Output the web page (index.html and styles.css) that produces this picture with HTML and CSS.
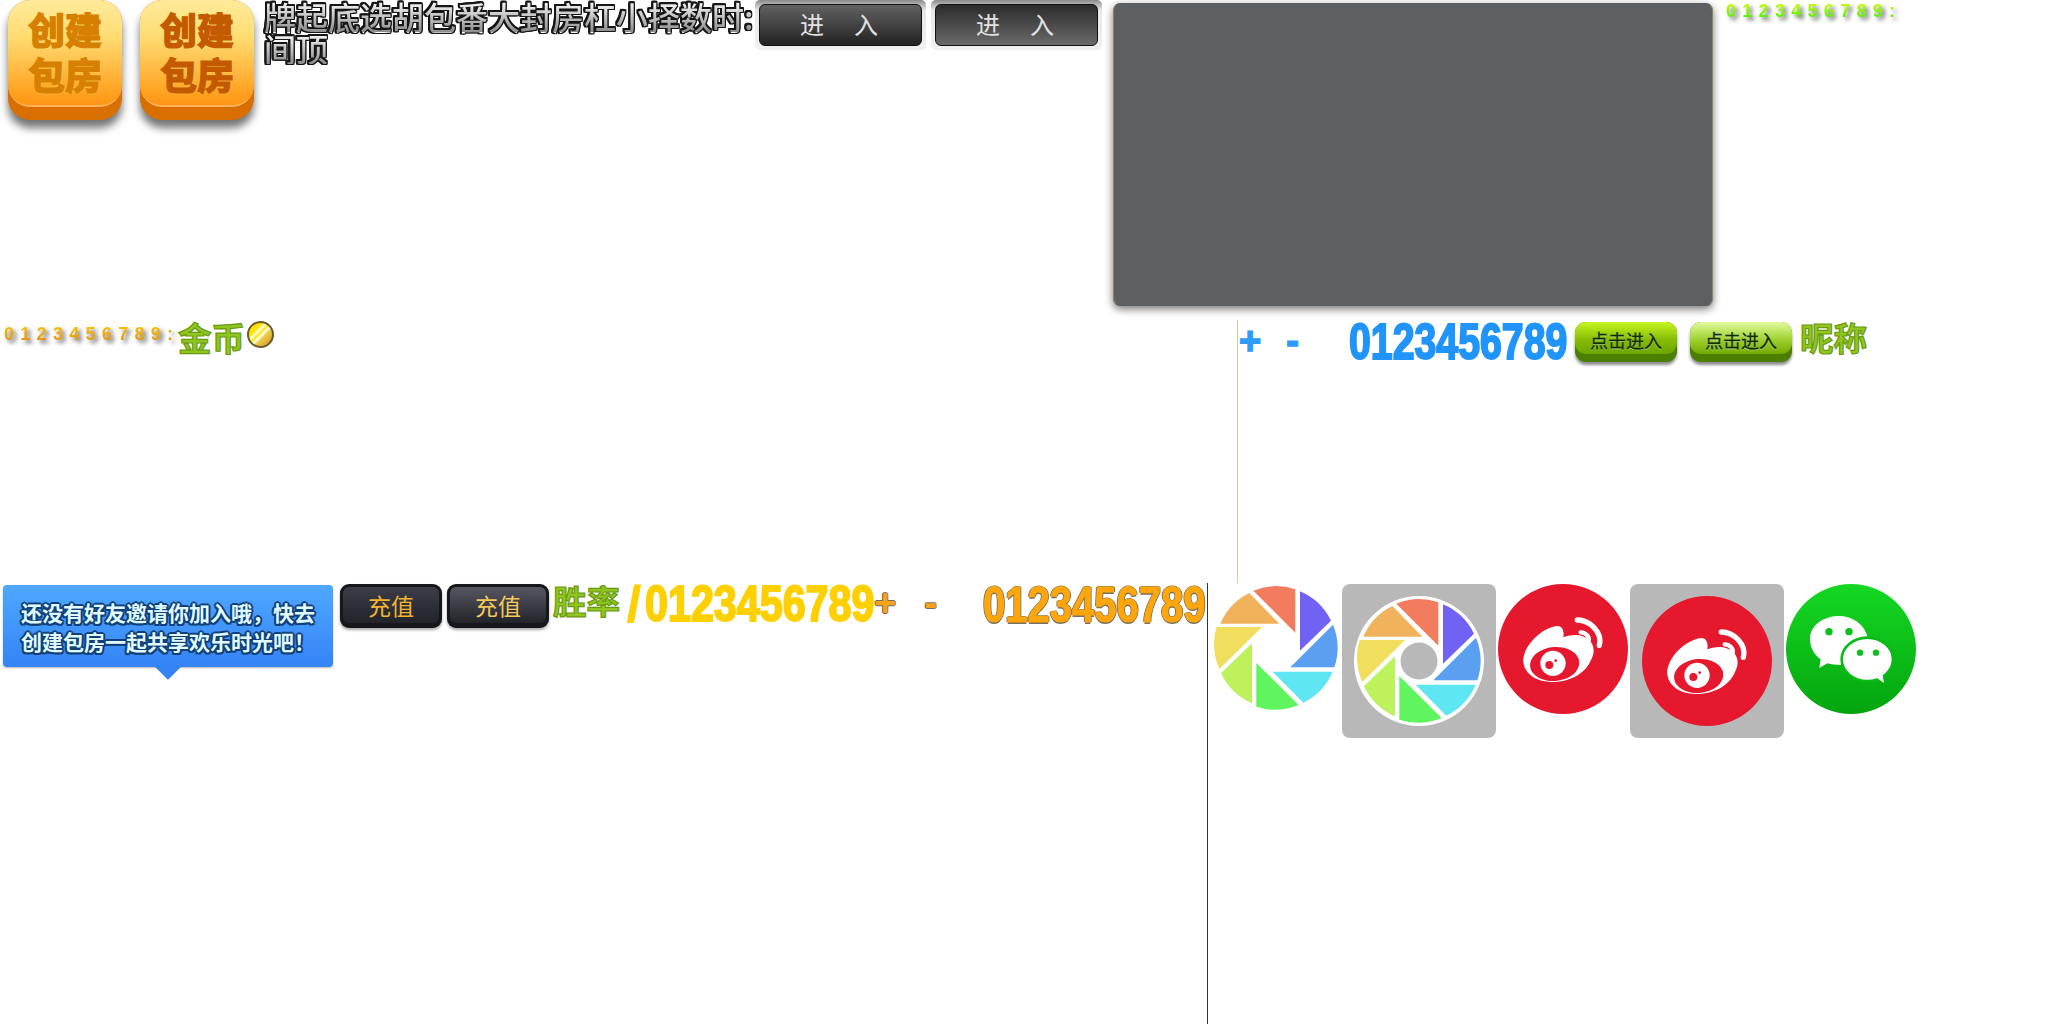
FILE: index.html
```html
<!DOCTYPE html>
<html lang="zh">
<head>
    <meta charset="UTF-8">
    <title>大厅资源</title>
    <link rel="stylesheet" href="styles.css">
</head>
<body>
    <svg class="defs" width="0" height="0">
        <defs>
            <symbol id="aperture" viewBox="0 0 450 444">
                <path fill="#7063f3" d="M297 52A183 183 0 0 1 390 140L297 230Z"/>
                <path fill="#5b9ff0" d="M396 152A183 183 0 0 1 400 280L268 280Z"/>
                <path fill="#5ee7f2" d="M395 293A183 183 0 0 1 307 386L215 293Z"/>
                <path fill="#60f45f" d="M293 393A183 183 0 0 1 166 398L166 267Z"/>
                <path fill="#bdf25c" d="M153 388A183 183 0 0 1 60 298L153 208Z"/>
                <path fill="#f1de5c" d="M55 285A183 183 0 0 1 47 159L183 159Z"/>
                <path fill="#f1b25c" d="M58 149A183 183 0 0 1 145 57L235 149Z"/>
                <path fill="#f47c5e" d="M157 50A183 183 0 0 1 283 46L283 176Z"/>
            </symbol>
            <symbol id="weibo" viewBox="0 0 390 390">
                <circle cx="195" cy="195" r="195" fill="#e5182e"/>
                <path fill="#fff" d="M76 235C72 200 110 145 165 128C190 120 200 135 196 160C225 150 250 150 270 165C290 182 292 205 278 230C260 270 215 294 160 294C115 294 80 270 76 235Z"/>
                <ellipse cx="170" cy="240" rx="74" ry="51" fill="#e5182e" transform="rotate(-5 170 240)"/>
                <circle cx="165" cy="238" r="38" fill="#fff"/>
                <circle cx="154" cy="243" r="12" fill="#e5182e"/>
                <circle cx="173" cy="230" r="4" fill="#e5182e"/>
                <path fill="none" stroke="#fff" stroke-width="16" stroke-linecap="round" d="M238 108C275 108 314 145 304 184"/>
                <path fill="none" stroke="#fff" stroke-width="13" stroke-linecap="round" d="M248 145C262 145 276 158 272 171"/>
            </symbol>
            <linearGradient id="wechat-bg" x1="0" y1="0" x2="0" y2="1">
                <stop offset="0" stop-color="#15d823"/>
                <stop offset="1" stop-color="#04a50e"/>
            </linearGradient>
        </defs>
    </svg>

    <div class="row row-one">
        <div class="create-btn"><div class="create-text"><div>创建</div><div>包房</div></div></div>
        <div class="create-btn create-btn-on"><div class="create-text"><div>创建</div><div>包房</div></div></div>
        <div class="rule-words">牌起底选胡包番大封房杠小择数时:间顶</div>
        <div class="enter-frame"><div class="enter-btn">进　入</div></div>
        <div class="enter-frame"><div class="enter-btn enter-btn-on">进　入</div></div>
        <div class="panel"></div>
        <div class="tiny-digits tiny-green">0123456789:</div>
    </div>

    <div class="row row-two">
        <div class="tiny-digits tiny-gold">0123456789:</div>
        <div class="green-word">金币</div>
        <div class="coin"></div>
        <div class="line line-tan"></div>
        <div class="sign-set sign-blue"><span>+</span><span>-</span></div>
        <div class="digit-box digit-blue-box"><span class="digit-text digit-blue">0123456789</span></div>
        <div class="go-btn"><div class="go-face">点击进入</div></div>
        <div class="go-btn go-btn-on"><div class="go-face">点击进入</div></div>
        <div class="green-word nick-word">昵称</div>
    </div>

    <div class="row row-three">
        <div class="tip">还没有好友邀请你加入哦，快去<br>创建包房一起共享欢乐时光吧！</div>
        <div class="pay-btn"><div class="pay-face">充值</div></div>
        <div class="pay-btn pay-btn-on"><div class="pay-face">充值</div></div>
        <div class="green-word rate-word">胜率</div>
        <div class="digit-box digit-slash-box"><span class="digit-text digit-slash">/</span></div>
        <div class="digit-box digit-yellow-box"><span class="digit-text digit-yellow">0123456789</span></div>
        <div class="sign-set sign-orange"><span>+</span><span>-</span></div>
        <div class="digit-box digit-orange-box"><span class="digit-text digit-orange">0123456789</span></div>
        <div class="line line-dark"></div>
        <svg class="icon aperture-plain"><use href="#aperture"/></svg>
        <div class="share-box">
            <svg class="share-art" viewBox="0 0 154 154">
                <circle cx="77" cy="77" r="65" fill="#fff"/>
                <circle cx="77" cy="77" r="18.5" fill="#b8b8b8"/>
                <svg x="2" y="3" width="150" height="148"><use href="#aperture"/></svg>
            </svg>
        </div>
        <svg class="icon icon-round"><use href="#weibo"/></svg>
        <div class="share-box share-box-weibo">
            <svg class="icon icon-round"><use href="#weibo"/></svg>
        </div>
        <svg class="icon icon-round" viewBox="0 0 390 390">
            <circle cx="195" cy="195" r="195" fill="url(#wechat-bg)"/>
            <path fill="#fff" d="M72 165C72 125 112 96 158 96C200 96 235 120 245 160C205 160 165 190 166 243C150 243 135 241 124 238L100 252L104 226C84 212 72 190 72 165Z"/>
            <circle cx="129" cy="143" r="11" fill="#0cc01a"/>
            <circle cx="189" cy="143" r="11" fill="#0cc01a"/>
            <ellipse cx="244" cy="226" rx="77" ry="65" fill="#fff" stroke="#0abb18" stroke-width="8"/>
            <path fill="#fff" d="M270 280L294 297L289 268Z"/>
            <circle cx="222" cy="206" r="9.5" fill="#0cc01a"/>
            <circle cx="270" cy="206" r="9.5" fill="#0cc01a"/>
        </svg>
    </div>
</body>
</html>
```

FILE: styles.css
```css
html, body {
    margin: 0;
    padding: 0;
    background: #fff;
}
body {
    width: 2048px;
    height: 1024px;
    overflow: hidden;
    font-family: "Noto Sans CJK SC", "Liberation Sans", sans-serif;
}
.defs {
    display: block;
    height: 0;
}
.row {
    display: flex;
    align-items: flex-start;
}
.row-one { height: 320px; }
.row-two { height: 263px; }
.row-three { height: 441px; }

/* create room buttons */
.create-btn {
    width: 114px;
    height: 120px;
    margin-left: 8px;
    margin-right: 10px;
    background: #d86f00;
    border-radius: 22px;
    box-shadow: 0 8px 9px rgba(0, 0, 0, 0.55);
    flex: none;
}
.create-btn + .create-btn { margin-right: 0; }
.create-text {
    box-sizing: border-box;
    height: 107px;
    padding-top: 7px;
    border-radius: 22px;
    border-bottom: 2px solid #ffb45a;
    background: linear-gradient(#ffeb9c 0%, #ffdc72 35%, #ffa526 85%, #ff9414 100%);
    text-align: center;
    font-size: 37px;
    line-height: 45px;
    font-weight: 900;
    color: #d67f00;
    -webkit-text-stroke: 1px #d67f00;
    text-shadow: 0 0 2px #ffee66;
}
.create-text div { height: 45px; }
.create-btn-on .create-text {
    color: #c35a00;
    -webkit-text-stroke-color: #c35a00;
}

.rule-words {
    width: 500px;
    margin: 0 -9px 0 10px;
    flex: none;
    font-size: 32px;
    line-height: 32px;
    font-weight: 500;
    word-break: break-all;
    color: transparent;
    background-image: linear-gradient(#ffffff, #8c8c8c);
    background-size: 100% 32px;
    -webkit-background-clip: text;
    background-clip: text;
    filter: drop-shadow(1.2px 0 0 #161616) drop-shadow(-1.2px 0 0 #161616) drop-shadow(0 1.2px 0 #161616) drop-shadow(0 -1.2px 0 #161616);
}

/* enter buttons */
.enter-frame {
    box-sizing: border-box;
    width: 171px;
    height: 50px;
    padding: 4px;
    margin-left: 5px;
    flex: none;
    border-radius: 5px;
    background: linear-gradient(#8a8a8a, #e8e8e8 20%, #f0f0f0);
}
.rule-words + .enter-frame { margin-left: 0; }
.enter-btn {
    box-sizing: border-box;
    height: 42px;
    border: 1px solid #111;
    border-radius: 6px;
    background: linear-gradient(#626262, #222);
    color: #e2e2e2;
    text-align: center;
    font-size: 24px;
    line-height: 38px;
    letter-spacing: 3px;
}
.enter-btn-on { background: linear-gradient(#2c2c2c, #6a6a6a); }

.panel {
    width: 600px;
    height: 303px;
    margin: 3px 0 0 11px;
    flex: none;
    box-sizing: border-box;
    border: 1px solid #5d6063;
    border-left-color: #8f8550;
    border-right-color: #8f8550;
    border-radius: 7px;
    background: #5d6063;
    box-shadow: 0 3px 8px rgba(0, 0, 0, 0.55);
}

/* small digit strips */
.tiny-digits {
    flex: none;
    font-family: "Liberation Sans", sans-serif;
    font-size: 18px;
    font-weight: 700;
    line-height: 22px;
    letter-spacing: 6.3px;
    color: transparent;
    -webkit-background-clip: text;
    background-clip: text;
    filter: drop-shadow(3px 3px 2px rgba(0, 0, 0, 0.6));
}
.tiny-green {
    margin-left: 13px;
    background-image: linear-gradient(#e6ff00, #28f000);
}
.tiny-gold {
    width: 174px;
    margin: 3px 0 0 4px;
    background-image: linear-gradient(#ffc800, #e08a10);
}

.green-word {
    flex: none;
    font-size: 33.5px;
    line-height: 36px;
    font-weight: 700;
    color: #8fc61f;
    -webkit-text-stroke: 1.2px #6a9a10;
}
.row-two .green-word { margin-top: -1px; }
.row-two .green-word.nick-word { margin: -1px 0 0 8px; }
.coin {
    width: 27px;
    height: 27px;
    box-sizing: border-box;
    margin: 1px 0 0 2px;
    flex: none;
    border: 2px solid #6a5a2a;
    border-radius: 50%;
    background: linear-gradient(135deg, #ffe600 0%, #ffe600 30%, #fff 38%, #ffe600 46%, #fff 54%, #f0cc40 62%, #c89030 100%);
}

.line {
    width: 1px;
    flex: none;
    align-self: stretch;
}
.line-tan {
    margin-left: 963px;
    background: #d8c8a0;
}
.line-dark { background: #333; }

/* signs beside the big digits */
.sign-set {
    display: flex;
    flex: none;
    font-family: "Liberation Sans", sans-serif;
    font-weight: 700;
    font-size: 38px;
    line-height: 44px;
}
.sign-blue {
    width: 110px;
    gap: 25px;
    margin: -1px 0 0 1px;
    color: #2d9bf8;
    -webkit-text-stroke: 1.5px #2d9bf8;
}
.sign-orange {
    width: 109px;
    gap: 28px;
    margin-top: -2px;
    color: #f7a31a;
    text-shadow: 1px 0 0 #77715f, -1px 0 0 #77715f, 0 1px 0 #77715f, 0 -1px 0 #77715f;
}

/* big condensed digits */
.digit-box {
    flex: none;
    height: 60px;
    margin-top: -8px;
}
.digit-blue-box { width: 226px; }
.digit-slash-box { width: 24px; margin-top: -9px; margin-left: 1px; }
.digit-yellow-box { width: 229px; margin-top: -9px; }
.digit-orange-box { width: 224px; margin-top: -8px; }
.digit-text {
    display: inline-block;
    transform-origin: left top;
    white-space: nowrap;
    font-family: "Liberation Sans", sans-serif;
    font-weight: 700;
    font-size: 50px;
    line-height: 60px;
}
.digit-blue {
    transform: scaleX(0.785);
    color: #2094fb;
    -webkit-text-stroke: 2px #2094fb;
}
.digit-slash {
    transform: translateX(6px);
    color: #ffd000;
    -webkit-text-stroke: 1px #ffd000;
}
.digit-yellow {
    transform: scaleX(0.825);
    color: #ffd000;
    -webkit-text-stroke: 2px #ffd000;
}
.digit-orange {
    transform: scaleX(0.8);
    color: #ffa60d;
    -webkit-text-stroke: 1px #ffa60d;
    text-shadow: 1.5px 0 0 #77715f, -1.5px 0 0 #77715f, 0 1.5px 0 #77715f, 0 -1.5px 0 #77715f;
}

/* green enter buttons */
.go-btn {
    width: 102px;
    height: 40px;
    margin-top: 2px;
    flex: none;
    border-radius: 11px;
    background: #4c7e00;
    box-shadow: 0 3px 3px rgba(0, 0, 0, 0.45);
}
.go-btn + .go-btn { margin-left: 13px; }
.go-face {
    box-sizing: border-box;
    height: 32px;
    border-radius: 11px;
    background: linear-gradient(#c8f622, #86bc04 55%, #6ba600);
    color: #0e3000;
    text-align: center;
    font-size: 18px;
    line-height: 37px;
    -webkit-text-stroke: 0.3px #0e3000;
    text-shadow: 0 1px 0 rgba(255, 255, 255, 0.5);
}
.go-btn-on .go-face { background: linear-gradient(#e2fb9e, #a0d030 55%, #72aa00); }

/* bubble tip */
.tip {
    position: relative;
    box-sizing: border-box;
    width: 330px;
    height: 82px;
    margin: 2px 0 0 3px;
    padding-top: 13px;
    flex: none;
    border-radius: 4px;
    background: linear-gradient(#4fa8ff, #3484f6);
    box-shadow: 0 1px 2px rgba(0, 0, 0, 0.3);
    text-align: center;
    font-size: 21px;
    line-height: 29px;
    font-weight: 700;
    color: #dffbff;
    text-shadow: 2px 0 0 #123f78, -2px 0 0 #123f78, 0 2px 0 #123f78, 0 -2px 0 #123f78, 1.5px 1.5px 0 #123f78, -1.5px 1.5px 0 #123f78, 1.5px -1.5px 0 #123f78, -1.5px -1.5px 0 #123f78;
}
.tip::after {
    content: "";
    position: absolute;
    left: 155px;
    bottom: -9px;
    width: 20px;
    height: 20px;
    background: #3484f6;
    transform: rotate(45deg);
    clip-path: polygon(100% 0, 100% 100%, 0 100%);
}

/* recharge buttons */
.pay-btn {
    box-sizing: border-box;
    width: 102px;
    height: 44px;
    margin: 1px 0 0 7px;
    padding: 3px;
    flex: none;
    border-radius: 9px;
    background: #16171b;
    box-shadow: 0 2px 3px rgba(0, 0, 0, 0.35);
}
.pay-btn-on { margin-left: 5px; }
.pay-face {
    height: 36px;
    border-radius: 6px;
    background: linear-gradient(#3c3d47, #22242a);
    text-align: center;
    font-size: 23px;
    line-height: 36px;
    color: #f2b431;
}
.pay-btn-on .pay-face {
    background: linear-gradient(#565762, #22242a);
    color: #f5c95a;
}
.row-three .rate-word { margin: -1px 0 0 4px; }

/* share icons */
.icon {
    flex: none;
    display: block;
}
.aperture-plain {
    width: 150px;
    height: 148px;
    margin: -9px -9px 0 -7px;
}
.share-box {
    width: 154px;
    height: 154px;
    margin-top: 1px;
    flex: none;
    border-radius: 8px;
    background: #b8b8b8;
}
.share-art {
    display: block;
    width: 154px;
    height: 154px;
}
.icon-round {
    width: 130px;
    height: 130px;
    margin: 1px 0 0 2px;
}
.share-box-weibo {
    display: flex;
    justify-content: center;
    margin-left: 2px;
}
.share-box-weibo .icon-round { margin: 12px 0 0 0; }
```
